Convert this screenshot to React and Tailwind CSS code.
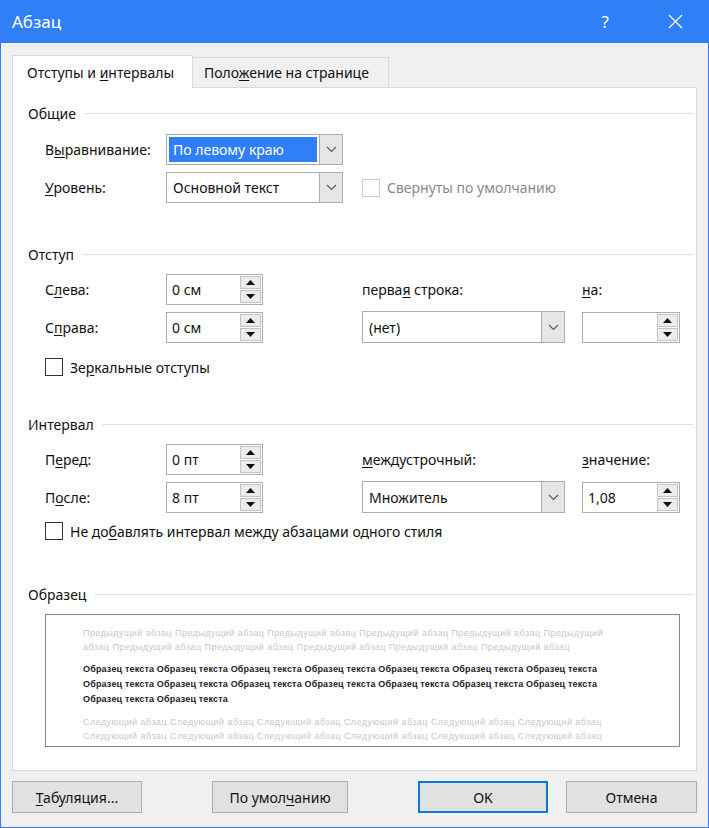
import React from 'react';

const font = "font-['Noto_Sans','Open_Sans',sans-serif]";

function Chevron() {
  return (
    <svg width="11" height="7" viewBox="0 0 11 7">
      <path d="M1 1 L5.5 5.5 L10 1" fill="none" stroke="#5a5a5a" strokeWidth="1.2" />
    </svg>
  );
}

function Select({ value, width, height = 31, highlighted }) {
  return (
    <div
      className="flex border border-[#adadad] bg-white"
      style={{ width, height }}
    >
      <div className="flex flex-1 items-center p-[2px]">
        {highlighted ? (
          <div className="flex h-full w-full items-center bg-[#2f7ff6] px-[4px] text-white">{value}</div>
        ) : (
          <div className="px-[4px]">{value}</div>
        )}
      </div>
      <div className="flex w-[23px] items-center justify-center border-l border-[#adadad] bg-[#e6e6e6]">
        <Chevron />
      </div>
    </div>
  );
}

function SpinBtn({ up }) {
  return (
    <div className="flex flex-1 items-center justify-center border border-[#c4c4c4] bg-[#ececec]">
      <svg width="9" height="5" viewBox="0 0 9 5">
        {up ? <path d="M0 5 L4.5 0 L9 5 Z" fill="#111" /> : <path d="M0 0 L4.5 5 L9 0 Z" fill="#111" />}
      </svg>
    </div>
  );
}

function Spin({ value, width = 97 }) {
  return (
    <div className="flex h-[31px] border border-[#adadad] bg-white" style={{ width }}>
      <div className="flex flex-1 items-center px-[5px]">{value}</div>
      <div className="flex w-[23px] flex-col gap-[1px] p-[1px]">
        <SpinBtn up />
        <SpinBtn />
      </div>
    </div>
  );
}

function Checkbox({ children, disabled }) {
  return (
    <div className="flex h-[20px] items-center gap-[7px]">
      <div
        className={
          disabled
            ? 'h-[18px] w-[18px] border border-[#d0d0d0] bg-white'
            : 'h-[18px] w-[18px] border border-[#333] bg-white'
        }
      />
      <span className={disabled ? 'text-[#8a8a8a]' : ''}>{children}</span>
    </div>
  );
}

function Header({ title, mt }) {
  return (
    <div className="flex h-[20px] items-center gap-[8px] pr-[2px]" style={{ marginTop: mt }}>
      <span>{title}</span>
      <div className="h-px flex-1 bg-[#e3e3e3]" />
    </div>
  );
}

function Button({ children, width, primary }) {
  return (
    <div
      className={
        primary
          ? 'flex h-[32px] items-center justify-center border-2 border-[#0a78d7] bg-[#e1e1e1]'
          : 'flex h-[32px] items-center justify-center border border-[#adadad] bg-[#e1e1e1]'
      }
      style={{ width }}
    >
      {children}
    </div>
  );
}

const prev1 = 'Предыдущий абзац Предыдущий абзац Предыдущий абзац Предыдущий абзац Предыдущий абзац Предыдущий';
const prev2 = 'абзац Предыдущий абзац Предыдущий абзац Предыдущий абзац Предыдущий абзац Предыдущий абзац';
const sample7 = Array(7).fill('Образец текста').join(' ');
const sample2 = Array(2).fill('Образец текста').join(' ');
const next6 = Array(6).fill('Следующий абзац').join(' ');

export default function App() {
  return (
    <div className={`${font} h-[828px] w-[709px] overflow-hidden border-x border-b border-[#2f7ff6] bg-[#f0f0f0] text-[14px] text-[#111]`}>
      <div className="flex h-[43px] items-center bg-[#2f7ff6] pl-[11px] text-white">
        <span className="flex-1 text-[17px]">Абзац</span>
        <span className="mr-[59px] text-[17px]">?</span>
        <svg className="mr-[25px]" width="15" height="15" viewBox="0 0 15 15">
          <path d="M1 1 L14 14 M14 1 L1 14" stroke="white" strokeWidth="1.3" />
        </svg>
      </div>

      <div className="flex items-end pl-[11px] pt-[12px]">
        <div className="relative z-10 -mb-px flex h-[33px] w-[181px] items-center border-x border-t border-[#d9d9d9] bg-white pl-[14px]">
          <span>Отступы и <u className="underline-offset-2">и</u>нтервалы</span>
        </div>
        <div className="flex h-[30px] w-[196px] items-center border-r border-t border-[#d9d9d9] bg-[#f0f0f0] pl-[11px]">
          <span>Поло<u className="underline-offset-2">ж</u>ение на странице</span>
        </div>
      </div>

      <div className="mx-[11px] h-[684px] border border-[#d9d9d9] bg-white pl-[15px]">
        <Header title="Общие" mt={15} />
        <div className="pl-[17px]">
          <div className="mt-[11px] flex items-center">
            <span className="w-[121px]">В<u className="underline-offset-2">ы</u>равнивание:</span>
            <Select value="По левому краю" width={177} highlighted />
          </div>
          <div className="mt-[7px] flex items-center">
            <span className="w-[121px]"><u className="underline-offset-2">У</u>ровень:</span>
            <Select value="Основной текст" width={177} />
            <div className="ml-[19px]">
              <Checkbox disabled>Свернуты по умолчанию</Checkbox>
            </div>
          </div>
        </div>

        <Header title="Отступ" mt={41} />
        <div className="pl-[17px]">
          <div className="mt-[10px] flex items-center">
            <span className="w-[121px]">С<u className="underline-offset-2">л</u>ева:</span>
            <Spin value="0 см" />
            <span className="ml-[99px] w-[220px]">перва<u className="underline-offset-2">я</u> строка:</span>
            <span><u className="underline-offset-2">н</u>а:</span>
          </div>
          <div className="mt-[6px] flex items-center">
            <span className="w-[121px]">С<u className="underline-offset-2">п</u>рава:</span>
            <Spin value="0 см" />
            <div className="ml-[99px]">
              <Select value="(нет)" width={203} height={32} />
            </div>
            <div className="ml-[17px]">
              <Spin value="" width={98} />
            </div>
          </div>
          <div className="mt-[14px]">
            <Checkbox>Зе<u className="underline-offset-2">р</u>кальные отступы</Checkbox>
          </div>
        </div>

        <Header title="Интервал" mt={37} />
        <div className="pl-[17px]">
          <div className="mt-[10px] flex items-center">
            <span className="w-[121px]">П<u className="underline-offset-2">е</u>ред:</span>
            <Spin value="0 пт" />
            <span className="ml-[99px] w-[220px]"><u className="underline-offset-2">м</u>еждустрочный:</span>
            <span><u className="underline-offset-2">з</u>начение:</span>
          </div>
          <div className="mt-[6px] flex items-center">
            <span className="w-[121px]">П<u className="underline-offset-2">о</u>сле:</span>
            <Spin value="8 пт" />
            <div className="ml-[99px]">
              <Select value="Множитель" width={203} height={32} />
            </div>
            <div className="ml-[17px]">
              <Spin value="1,08" width={98} />
            </div>
          </div>
          <div className="mt-[8px]">
            <Checkbox>Не до<u className="underline-offset-2">б</u>авлять интервал между абзацами одного стиля</Checkbox>
          </div>
        </div>

        <Header title="Образец" mt={43} />
        <div className="ml-[17px] mt-[10px] h-[133px] w-[635px] overflow-hidden border border-[#808a8a] pl-[37px] pt-[11px] font-['Liberation_Sans',sans-serif] text-[9px] leading-[14px] whitespace-nowrap">
          <div className="tracking-[0.45px] text-[#c4c8cc]">{prev1}</div>
          <div className="tracking-[0.45px] text-[#c4c8cc]">{prev2}</div>
          <div className="mt-[8px] font-semibold tracking-[0.17px] text-[#222]">
            <div className="leading-[15px]">{sample7}</div>
            <div className="leading-[15px]">{sample7}</div>
            <div className="leading-[15px]">{sample2}</div>
          </div>
          <div className="mt-[8px] tracking-[0.45px] text-[#c4c8cc]">{next6}</div>
          <div className="tracking-[0.45px] text-[#c4c8cc]">{next6}</div>
        </div>
      </div>

      <div className="mt-[10px] flex pl-[11px]">
        <Button width={130}><span><u className="underline-offset-2">Т</u>абуляция...</span></Button>
        <div className="ml-[70px]">
          <Button width={136}><span>По умол<u className="underline-offset-2">ч</u>анию</span></Button>
        </div>
        <div className="ml-[70px]">
          <Button width={130} primary>OK</Button>
        </div>
        <div className="ml-[18px]">
          <Button width={131}>Отмена</Button>
        </div>
      </div>
    </div>
  );
}
